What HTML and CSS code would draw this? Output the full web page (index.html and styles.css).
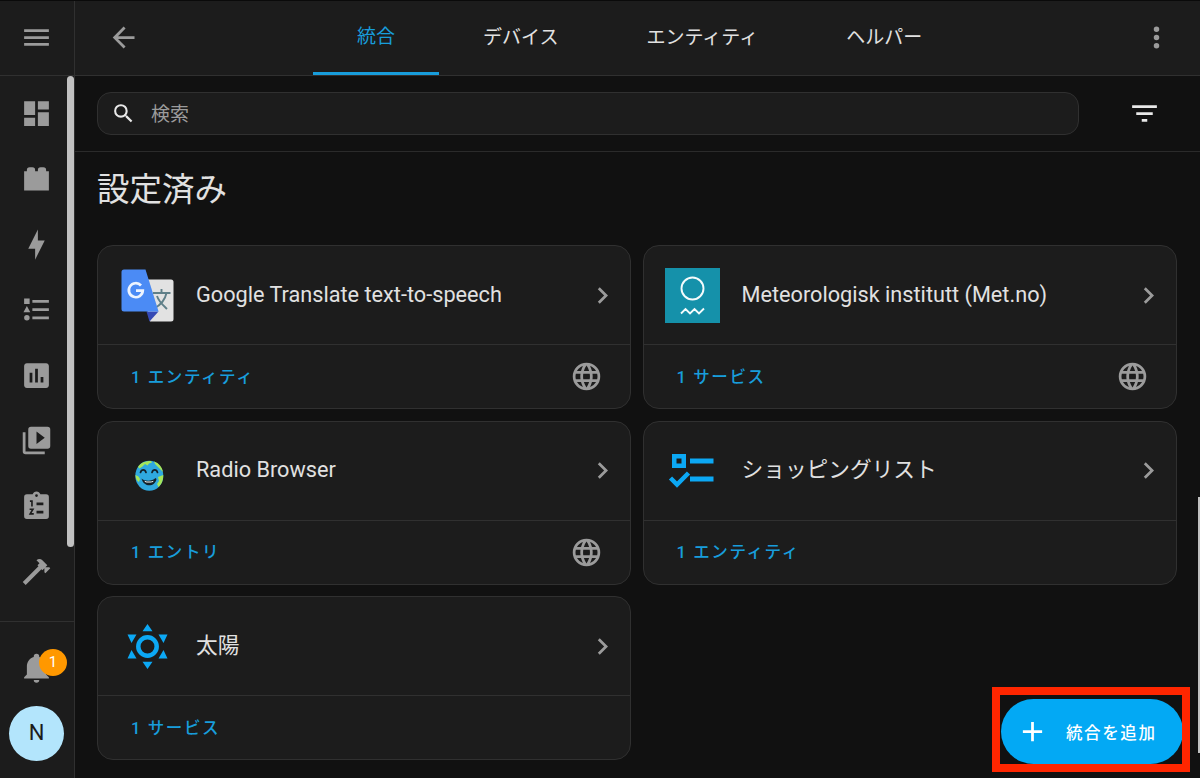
FILE: index.html
```html
<!DOCTYPE html>
<html lang="ja">
<head>
    <meta charset="UTF-8">
    <meta name="viewport" content="width=device-width, initial-scale=1.0">
    <title>設定 - 統合</title>
    <link rel="stylesheet" href="styles.css">
</head>
<body>
    <div class="app">
        <aside class="sidebar">
            <div class="menu-button">
                <svg class="icon" viewBox="0 0 24 24"><path d="M3,6H21V8H3V6M3,11H21V13H3V11M3,16H21V18H3V16Z"/></svg>
            </div>
            <nav class="nav">
                <a class="nav-item"><svg class="icon" viewBox="0 0 24 24"><path d="M13,3V9H21V3M13,21H21V11H13M3,21H11V15H3M3,13H11V3H3V13Z"/></svg></a>
                <a class="nav-item"><svg class="icon" viewBox="0 0 24 24"><path d="M19,6V5A2,2 0 0,0 17,3H15A2,2 0 0,0 13,5V6H11V5A2,2 0 0,0 9,3H7A2,2 0 0,0 5,5V6H3V20H21V6H19Z"/></svg></a>
                <a class="nav-item"><svg class="icon" viewBox="0 0 24 24"><path d="M11 15H6L13 1V9H18L11 23V15Z"/></svg></a>
                <a class="nav-item"><svg class="icon" viewBox="0 0 24 24"><path d="M5,9.5L7.5,14H2.5L5,9.5M3,4H7V8H3V4M5,20A2,2 0 0,0 7,18A2,2 0 0,0 5,16A2,2 0 0,0 3,18A2,2 0 0,0 5,20M9,5V7H21V5H9M9,19H21V17H9V19M9,13H21V11H9V13Z"/></svg></a>
                <a class="nav-item"><svg class="icon" viewBox="0 0 24 24"><path d="M9 17H7V10H9V17M13 17H11V7H13V17M17 17H15V13H17V17M19 3H5C3.89 3 3 3.89 3 5V19C3 20.1 3.9 21 5 21H19C20.1 21 21 20.1 21 19V5C21 3.89 20.1 3 19 3Z"/></svg></a>
                <a class="nav-item"><svg class="icon" viewBox="0 0 24 24"><path d="M4,6H2V20A2,2 0 0,0 4,22H18V20H4V6M20,2H8A2,2 0 0,0 6,4V16A2,2 0 0,0 8,18H20A2,2 0 0,0 22,16V4A2,2 0 0,0 20,2M12,14.5V5.5L18,10L12,14.5Z"/></svg></a>
                <a class="nav-item">
                    <svg class="icon" viewBox="0 0 24 24">
                        <path fill-rule="evenodd" d="M19,3H14.82C14.4,1.84 13.3,1 12,1C10.7,1 9.6,1.84 9.18,3H5A2,2 0 0,0 3,5V19A2,2 0 0,0 5,21H19A2,2 0 0,0 21,19V5A2,2 0 0,0 19,3M12,3A1,1 0 0,1 12,5A1,1 0 0,1 12,3M12,9H17V11H12ZM12,15H17V17H12Z"/>
                        <path class="clip-marks" d="M7.2,8.1H8.7V12M7,14H9.4L7.4,17.4H10"/>
                    </svg>
                </a>
                <a class="nav-item"><svg class="icon" viewBox="0 0 24 24"><path d="M2 19.63L13.43 8.2L12.72 7.5L14.14 6.07L12 3.89C13.2 2.7 15.09 2.7 16.27 3.89L19.87 7.5L18.45 8.91H21.29L22 9.62L18.45 13.21L17.74 12.5V9.62L16.27 11.04L15.56 10.33L4.13 21.76L2 19.63Z"/></svg></a>
                <div class="nav-scrollbar"></div>
            </nav>
            <div class="sidebar-bottom">
                <a class="notifications">
                    <svg class="icon" viewBox="0 0 24 24"><path d="M21,19V20H3V19L5,17V11C5,7.9 7.03,5.17 10,4.29C10,4.19 10,4.1 10,4A2,2 0 0,1 12,2A2,2 0 0,1 14,4C14,4.1 14,4.19 14,4.29C16.97,5.17 19,7.9 19,11V17L21,19M14,21A2,2 0 0,1 12,23A2,2 0 0,1 10,21"/></svg>
                    <span class="badge">1</span>
                </a>
                <a class="avatar">N</a>
            </div>
        </aside>

        <main class="main">
            <header class="header">
                <svg class="icon" viewBox="0 0 24 24"><path d="M20,11V13H8L13.5,18.5L12.08,19.92L4.16,12L12.08,4.08L13.5,5.5L8,11H20Z"/></svg>
                <nav class="tabs">
                    <a class="tab active">統合</a>
                    <a class="tab">デバイス</a>
                    <a class="tab">エンティティ</a>
                    <a class="tab">ヘルパー</a>
                </nav>
                <svg class="icon" viewBox="0 0 24 24"><path d="M12,16A2,2 0 0,1 14,18A2,2 0 0,1 12,20A2,2 0 0,1 10,18A2,2 0 0,1 12,16M12,10A2,2 0 0,1 14,12A2,2 0 0,1 12,14A2,2 0 0,1 10,12A2,2 0 0,1 12,10M12,4A2,2 0 0,1 14,6A2,2 0 0,1 12,8A2,2 0 0,1 10,6A2,2 0 0,1 12,4Z"/></svg>
            </header>

            <div class="search-bar">
                <div class="search">
                    <svg class="icon search-icon" viewBox="0 0 24 24"><path d="M9.5,3A6.5,6.5 0 0,1 16,9.5C16,11.11 15.41,12.59 14.44,13.73L14.71,14H15.5L20.5,19L19,20.5L14,15.5V14.71L13.73,14.44C12.59,15.41 11.11,16 9.5,16A6.5,6.5 0 0,1 3,9.5A6.5,6.5 0 0,1 9.5,3M9.5,5C7,5 5,7 5,9.5C5,12 7,14 9.5,14C12,14 14,12 14,9.5C14,7 12,5 9.5,5Z"/></svg>
                    <span class="placeholder">検索</span>
                </div>
                <svg class="icon filter-icon" viewBox="0 0 24 24"><path d="M6,13H18V11H6M3,6V8H21V6M10,18H14V16H10V18Z"/></svg>
            </div>

            <section class="content">
                <h1>設定済み</h1>
                <div class="cards">
                    <div class="card">
                        <div class="card-header">
                            <svg class="logo" viewBox="0 0 55 55">
                                <path fill="#e2e2e2" d="M20 11.500H51A2.500 2.500 0 0 1 53.500 14V51A2.500 2.500 0 0 1 51 53.500H30Z"/>
                                <path fill="#c9cbcc" d="M28.500 11.500L38.500 43.500L31 38Z"/>
                                <path fill="none" stroke="#5f7f88" stroke-width="1.900" d="M33 25H50.500M41.500 21V25M46.500 25C45 32 40 37.500 34 40.500M37 28C39 34 43 37 47 41"/>
                                <path fill="#3549b4" d="M26.500 43.500H38.500L29.500 53.500Z"/>
                                <path fill="#4b8bf5" d="M4 1.500H25.500L38.500 43.500H4A2.500 2.500 0 0 1 1.500 41V4A2.500 2.500 0 0 1 4 1.500Z"/>
                                <path fill="none" stroke="#edf4ff" stroke-width="2.700" d="M21 17.500A7 7 0 1 0 22.800 22.700H16"/>
                            </svg>
                            <span class="card-title">Google Translate text-to-speech</span>
                            <svg class="icon" viewBox="0 0 24 24"><path d="M8.59,16.58L13.17,12L8.59,7.41L10,6L16,12L10,18L8.59,16.58Z"/></svg>
                        </div>
                        <div class="card-footer">
                            <a class="card-link">1 エンティティ</a>
                            <svg class="icon" viewBox="0 0 24 24"><path d="M16.36,14C16.44,13.34 16.5,12.68 16.5,12C16.5,11.32 16.44,10.66 16.36,10H19.74C19.9,10.64 20,11.31 20,12C20,12.69 19.9,13.36 19.74,14M14.59,19.56C15.19,18.45 15.65,17.25 15.97,16H18.92C17.96,17.65 16.43,18.93 14.59,19.56M14.34,14H9.66C9.56,13.34 9.5,12.68 9.5,12C9.5,11.32 9.56,10.65 9.66,10H14.34C14.43,10.65 14.5,11.32 14.5,12C14.5,12.68 14.43,13.34 14.34,14M12,19.96C11.17,18.76 10.5,17.43 10.09,16H13.91C13.5,17.43 12.83,18.76 12,19.96M8,8H5.08C6.03,6.34 7.57,5.06 9.4,4.44C8.8,5.55 8.35,6.75 8,8M5.08,16H8C8.35,17.25 8.8,18.45 9.4,19.56C7.57,18.93 6.03,17.65 5.08,16M4.26,14C4.1,13.36 4,12.69 4,12C4,11.31 4.1,10.64 4.26,10H7.64C7.56,10.66 7.5,11.32 7.5,12C7.5,12.68 7.56,13.34 7.64,14M12,4.03C12.83,5.23 13.5,6.57 13.91,8H10.09C10.5,6.57 11.17,5.23 12,4.03M18.92,8H15.97C15.65,6.75 15.19,5.55 14.59,4.44C16.43,5.07 17.96,6.34 18.92,8M12,2C6.47,2 2,6.5 2,12A10,10 0 0,0 12,22A10,10 0 0,0 22,12A10,10 0 0,0 12,2Z"/></svg>
                        </div>
                    </div>

                    <div class="card">
                        <div class="card-header">
                            <svg class="logo" viewBox="0 0 55 55">
                                <rect width="55" height="55" fill="#1591aa"/>
                                <circle cx="27.500" cy="20.500" r="11" fill="none" stroke="#f4fbfc" stroke-width="1.900"/>
                                <path fill="none" stroke="#f4fbfc" stroke-width="1.900" d="M16 45.500L20.500 41L25 45.500L29.500 41L34 45.500L39 40.500"/>
                            </svg>
                            <span class="card-title">Meteorologisk institutt (Met.no)</span>
                            <svg class="icon" viewBox="0 0 24 24"><path d="M8.59,16.58L13.17,12L8.59,7.41L10,6L16,12L10,18L8.59,16.58Z"/></svg>
                        </div>
                        <div class="card-footer">
                            <a class="card-link">1 サービス</a>
                            <svg class="icon" viewBox="0 0 24 24"><path d="M16.36,14C16.44,13.34 16.5,12.68 16.5,12C16.5,11.32 16.44,10.66 16.36,10H19.74C19.9,10.64 20,11.31 20,12C20,12.69 19.9,13.36 19.74,14M14.59,19.56C15.19,18.45 15.65,17.25 15.97,16H18.92C17.96,17.65 16.43,18.93 14.59,19.56M14.34,14H9.66C9.56,13.34 9.5,12.68 9.5,12C9.5,11.32 9.56,10.65 9.66,10H14.34C14.43,10.65 14.5,11.32 14.5,12C14.5,12.68 14.43,13.34 14.34,14M12,19.96C11.17,18.76 10.5,17.43 10.09,16H13.91C13.5,17.43 12.83,18.76 12,19.96M8,8H5.08C6.03,6.34 7.57,5.06 9.4,4.44C8.8,5.55 8.35,6.75 8,8M5.08,16H8C8.35,17.25 8.8,18.45 9.4,19.56C7.57,18.93 6.03,17.65 5.08,16M4.26,14C4.1,13.36 4,12.69 4,12C4,11.31 4.1,10.64 4.26,10H7.64C7.56,10.66 7.5,11.32 7.5,12C7.5,12.68 7.56,13.34 7.64,14M12,4.03C12.83,5.23 13.5,6.57 13.91,8H10.09C10.5,6.57 11.17,5.23 12,4.03M18.92,8H15.97C15.65,6.75 15.19,5.55 14.59,4.44C16.43,5.07 17.96,6.34 18.92,8M12,2C6.47,2 2,6.5 2,12A10,10 0 0,0 12,22A10,10 0 0,0 22,12A10,10 0 0,0 12,2Z"/></svg>
                        </div>
                    </div>

                    <div class="card">
                        <div class="card-header">
                            <svg class="logo" viewBox="0 0 55 55">
                                <ellipse cx="29.300" cy="32.800" rx="14" ry="15" fill="#2fa9df"/>
                                <path fill="#a5e65a" d="M18 24C20 20 25 17.800 31 17.900L32 19.500L29 20.500L27.500 22.500L25 21L22.500 23.500L19.500 25.500ZM34 18.600C39 20 42 24.500 43 29L40.500 26.500L37.500 23.500L35 21ZM15.500 32L18.500 33.500L20 36L19 39C17 38 15.500 35.500 15.500 32ZM38 34L43.200 32C43.500 37 41.500 41.500 38.500 44L37 41L39 38Z"/>
                                <path fill="none" stroke="#14222a" stroke-width="1.700" stroke-linecap="round" d="M20.500 29.500C21.500 26 25 26 26 29.500M32 29.500C33 26 36.500 26 37.500 29.500"/>
                                <path fill="#14222a" d="M21.500 35.500C25 38.500 32 38.500 35.500 35L36.500 36C35 44.500 23.500 44.500 21.500 35.500Z"/>
                                <path fill="#f4fbfc" d="M24.500 37.700C27 38.900 31 38.900 33.500 37.700L33 38.900C30 39.800 27 39.800 25 38.900Z"/>
                            </svg>
                            <span class="card-title">Radio Browser</span>
                            <svg class="icon" viewBox="0 0 24 24"><path d="M8.59,16.58L13.17,12L8.59,7.41L10,6L16,12L10,18L8.59,16.58Z"/></svg>
                        </div>
                        <div class="card-footer">
                            <a class="card-link">1 エントリ</a>
                            <svg class="icon" viewBox="0 0 24 24"><path d="M16.36,14C16.44,13.34 16.5,12.68 16.5,12C16.5,11.32 16.44,10.66 16.36,10H19.74C19.9,10.64 20,11.31 20,12C20,12.69 19.9,13.36 19.74,14M14.59,19.56C15.19,18.45 15.65,17.25 15.97,16H18.92C17.96,17.65 16.43,18.93 14.59,19.56M14.34,14H9.66C9.56,13.34 9.5,12.68 9.5,12C9.5,11.32 9.56,10.65 9.66,10H14.34C14.43,10.65 14.5,11.32 14.5,12C14.5,12.68 14.43,13.34 14.34,14M12,19.96C11.17,18.76 10.5,17.43 10.09,16H13.91C13.5,17.43 12.83,18.76 12,19.96M8,8H5.08C6.03,6.34 7.57,5.06 9.4,4.44C8.8,5.55 8.35,6.75 8,8M5.08,16H8C8.35,17.25 8.8,18.45 9.4,19.56C7.57,18.93 6.03,17.65 5.08,16M4.26,14C4.1,13.36 4,12.69 4,12C4,11.31 4.1,10.64 4.26,10H7.64C7.56,10.66 7.5,11.32 7.5,12C7.5,12.68 7.56,13.34 7.64,14M12,4.03C12.83,5.23 13.5,6.57 13.91,8H10.09C10.5,6.57 11.17,5.23 12,4.03M18.92,8H15.97C15.65,6.75 15.19,5.55 14.59,4.44C16.43,5.07 17.96,6.34 18.92,8M12,2C6.47,2 2,6.5 2,12A10,10 0 0,0 12,22A10,10 0 0,0 22,12A10,10 0 0,0 12,2Z"/></svg>
                        </div>
                    </div>

                    <div class="card">
                        <div class="card-header">
                            <svg class="logo" viewBox="0 0 55 55">
                                <path fill="#0ca8f4" fill-rule="evenodd" d="M7 11H21V25H7ZM11.500 15.500V20.500H16.500V15.500ZM25 15.500H48.500V20.500H25ZM25 33.500H48.500V38.500H25Z"/>
                                <path fill="none" stroke="#0ca8f4" stroke-width="4.500" d="M5.500 35L12 41.500L23.500 30"/>
                            </svg>
                            <span class="card-title">ショッピングリスト</span>
                            <svg class="icon" viewBox="0 0 24 24"><path d="M8.59,16.58L13.17,12L8.59,7.41L10,6L16,12L10,18L8.59,16.58Z"/></svg>
                        </div>
                        <div class="card-footer">
                            <a class="card-link">1 エンティティ</a>
                        </div>
                    </div>

                    <div class="card">
                        <div class="card-header">
                            <svg class="logo" viewBox="0 0 55 55">
                                <circle cx="27.500" cy="27.500" r="9.200" fill="none" stroke="#0ca8f4" stroke-width="4.500"/>
                                <path fill="#0ca8f4" d="M27.500 5L32.500 12.200H22.500ZM27.500 50L32.500 42.800H22.500ZM7.500 15.500H16.500L11.500 24ZM47.500 15.500H38.500L43.500 24ZM7.500 39.500H16.500L11.500 31ZM47.500 39.500H38.500L43.500 31Z"/>
                            </svg>
                            <span class="card-title">太陽</span>
                            <svg class="icon" viewBox="0 0 24 24"><path d="M8.59,16.58L13.17,12L8.59,7.41L10,6L16,12L10,18L8.59,16.58Z"/></svg>
                        </div>
                        <div class="card-footer">
                            <a class="card-link">1 サービス</a>
                        </div>
                    </div>
                </div>
            </section>
        </main>
    </div>

    <div class="page-scrollbar"></div>
    <div class="highlight">
        <button class="fab">
            <svg class="icon" viewBox="0 0 24 24"><path d="M19,13H13V19H11V13H5V11H11V5H13V11H19V13Z"/></svg>
            <span>統合を追加</span>
        </button>
    </div>
</body>
</html>
```
FILE: styles.css
```css
* {
    box-sizing: border-box;
}
body {
    margin: 0;
    height: 778px;
    overflow: hidden;
    background-color: #111111;
    color: #e1e1e1;
    font-family: Roboto, "Noto Sans CJK JP", sans-serif;
}
.app {
    display: flex;
    height: 778px;
    border-top: 1px solid #0a0a0a;
}
.icon {
    width: 33px;
    height: 33px;
    flex-shrink: 0;
    fill: #9b9b9b;
}

/* sidebar */
.sidebar {
    display: flex;
    flex-direction: column;
    width: 75px;
    flex-shrink: 0;
    background-color: #1c1c1c;
    border-right: 1px solid #303030;
}
.menu-button {
    display: flex;
    align-items: center;
    height: 75px;
    padding: 0 0 1px 20px;
    border-bottom: 1px solid #303030;
}
.nav {
    position: relative;
    flex: 1;
    padding-top: 5px;
}
.nav-item {
    display: flex;
    align-items: center;
    height: 65.4px;
    padding-left: 20px;
}
.clip-marks {
    fill: none;
    stroke: #1c1c1c;
    stroke-width: 1.2;
}
.nav-scrollbar {
    position: absolute;
    top: 0;
    right: 0;
    width: 7px;
    height: 471px;
    border-radius: 4px;
    background-color: #c1c1c1;
}
.sidebar-bottom {
    height: 157px;
    padding-top: 29px;
    border-top: 1px solid #303030;
}
.notifications {
    position: relative;
    display: block;
    height: 55px;
    padding-left: 20px;
}
.badge {
    position: absolute;
    left: 39px;
    top: -2px;
    width: 28px;
    height: 27px;
    border-radius: 50%;
    background-color: #ff9800;
    color: #ffffff;
    font-size: 15px;
    line-height: 27px;
    text-align: center;
}
.avatar {
    display: block;
    width: 55px;
    height: 55px;
    margin-left: 9px;
    border-radius: 50%;
    background-color: #b3e5fc;
    color: #1c1c1c;
    font-size: 22px;
    line-height: 54px;
    text-align: center;
}

/* header */
.main {
    flex: 1;
}
.header {
    display: flex;
    align-items: center;
    height: 75px;
    padding: 0 27px 0 32px;
    background-color: #1c1c1c;
    border-bottom: 1px solid #303030;
}
.header .icon {
    margin-bottom: 1px;
}
.tabs {
    display: flex;
    flex: 1;
    height: 75px;
    padding-left: 173px;
}
.tab {
    padding: 0 44px;
    border-bottom: 3px solid transparent;
    font-size: 19px;
    line-height: 73px;
}
.tab.active {
    height: 74px;
    color: #189ddb;
    border-bottom-color: #189ddb;
    line-height: 71px;
}
.search-bar {
    display: flex;
    align-items: center;
    justify-content: space-between;
    height: 76px;
    padding: 0 39px 0 22px;
    border-bottom: 1px solid #2b2b2b;
}
.search {
    display: flex;
    align-items: center;
    gap: 15px;
    width: 982px;
    height: 43px;
    padding-left: 13px;
    background-color: #1c1c1c;
    border: 1px solid #303030;
    border-radius: 14px;
}
.placeholder {
    padding-bottom: 3px;
    color: #9b9b9b;
    font-size: 19px;
}
.search-icon {
    width: 25px;
    height: 25px;
    fill: #e8e8e8;
}
.filter-icon {
    fill: #e8e8e8;
}

/* integrations */
.content {
    padding: 14px 22px 0;
}
h1 {
    height: 79px;
    margin: 0;
    font-size: 32.5px;
    font-weight: 400;
    line-height: 49px;
}
.cards {
    display: grid;
    grid-template-columns: 534px 534px;
    gap: 11.5px;
}
.card {
    height: 164px;
    background-color: #1c1c1c;
    border: 1px solid #303030;
    border-radius: 16px;
}
.card-header {
    display: flex;
    align-items: center;
    height: 99px;
    padding: 0 11px 0 21.5px;
    border-bottom: 1px solid #303030;
}
.logo {
    width: 55px;
    height: 55px;
    flex-shrink: 0;
}
.card-title {
    flex: 1;
    padding: 0 0 1px 21.5px;
    font-size: 21.7px;
    line-height: 28px;
}
.card-footer {
    display: flex;
    align-items: center;
    justify-content: space-between;
    height: 63px;
    padding: 0 27px 0 33px;
}
.card-link {
    padding-bottom: 2px;
    color: #189ddb;
    font-size: 16.5px;
    font-weight: 500;
    letter-spacing: 1.6px;
}

/* add button */
.page-scrollbar {
    position: absolute;
    top: 497px;
    right: 0;
    width: 2px;
    height: 256px;
    background-color: #c1c1c1;
}
.highlight {
    position: absolute;
    left: 992px;
    top: 687px;
    width: 198px;
    height: 85px;
    border: 8px solid #ff2600;
    background-color: #111111;
    overflow: hidden;
}
.fab {
    display: flex;
    align-items: center;
    gap: 17px;
    width: 182px;
    height: 65px;
    margin: 4px 0 0 1px;
    padding: 0 0 0 15px;
    border: none;
    border-radius: 33px;
    background-color: #03a9f4;
    color: #ffffff;
    font-family: inherit;
    font-size: 16.5px;
    font-weight: 500;
    letter-spacing: 1.6px;
    white-space: nowrap;
}
.fab .icon {
    fill: #ffffff;
}
```
